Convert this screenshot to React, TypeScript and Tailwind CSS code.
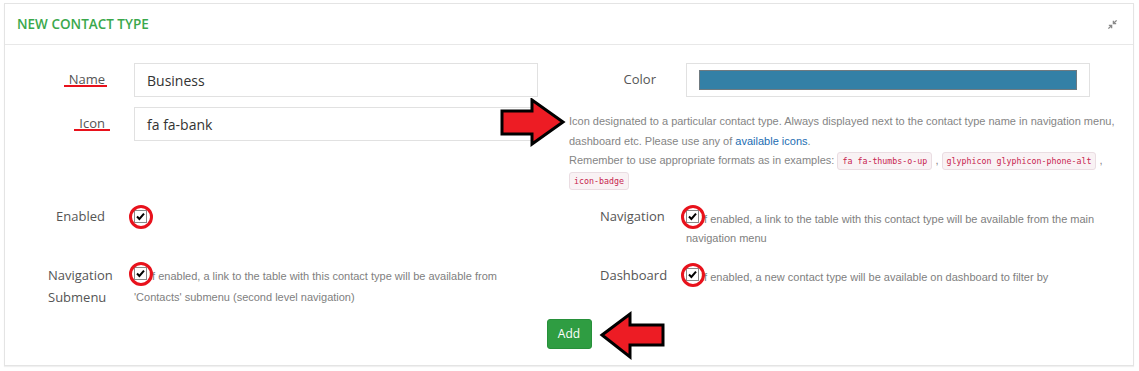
import React from "react";

const openSans = { fontFamily: '"Open Sans", "Noto Sans", sans-serif' };
const arial = { fontFamily: '"Liberation Sans", Arial, sans-serif' };
const mono = { fontFamily: '"DejaVu Sans Mono", "Liberation Mono", monospace' };

function Check() {
  return (
    <span className="relative inline-block h-[13px] w-[13px] border border-[#8a8a8a] bg-white align-baseline">
      <svg viewBox="0 0 13 13" className="absolute -left-px -top-px h-[13px] w-[13px]">
        <path d="M3 6.5 L5.4 9 L10 3.6" fill="none" stroke="#000" strokeWidth="2" />
      </svg>
      {/* red annotation ring */}
      <span className="absolute -left-[6.5px] -top-[6.5px] h-[24px] w-[24px] rounded-full border-[3px] border-[#e8121c]" />
    </span>
  );
}

function Code({ children }: { children: React.ReactNode }) {
  return (
    <code
      style={mono}
      className="inline-block h-[18px] rounded-[3px] border border-[#eadde2] bg-[#f9f2f4] px-[4px] align-middle text-[8.3px] leading-[16px] text-[#c7254e]"
    >
      {children}
    </code>
  );
}

function Arrow({ left }: { left?: boolean }) {
  const pts = left
    ? "3,24 31,3 31,14 64,14 64,34 31,34 31,46"
    : "3,13 33,13 33,2 64,24 33,46 33,36 3,36";
  return (
    <svg width="68" height="50" viewBox="0 0 68 50">
      <polygon points={pts} fill="#ed1c24" stroke="#000" strokeWidth="3" strokeLinejoin="miter" />
    </svg>
  );
}

function Underlined({ text, className }: { text: string; className: string }) {
  return (
    <span className="relative">
      {text}
      <span className={`absolute top-[15px] h-[2px] bg-[#e8121c] ${className}`} />
    </span>
  );
}

export default function App() {
  return (
    <div className="min-h-screen bg-white pl-[4px] pt-[3px]">
      <div className="relative h-[363px] w-[1130px] border border-[#e4e4e4] bg-white shadow-[0_1px_1px_rgba(0,0,0,0.06)]">
        {/* Header */}
        <div className="flex h-[41px] items-center justify-between border-b border-[#e8e8e8] pl-[12px] pr-[15px]">
          <span style={openSans} className="text-[13.5px] font-semibold text-[#3aa84c]">
            NEW CONTACT TYPE
          </span>
          <svg viewBox="0 0 24 24" className="h-[11px] w-[11px]" fill="none" stroke="#8a8a8a" strokeWidth="3">
            <polyline points="4 14 10 14 10 20" />
            <polyline points="20 10 14 10 14 4" />
            <line x1="14" y1="10" x2="21" y2="3" />
            <line x1="3" y1="21" x2="10" y2="14" />
          </svg>
        </div>

        <div className="pt-[18px]" style={openSans}>
          {/* Name / Color */}
          <div className="flex h-[34px] items-center">
            <div className="w-[100px] text-right text-[13px] text-[#555]">
              <Underlined text="Name" className="-left-[5px] -right-[2px]" />
            </div>
            <div className="ml-[29px] flex h-[34px] w-[404px] items-center border border-[#e1e1e1] pl-[12px] text-[14px] text-[#333]">
              Business
            </div>
            <div className="w-[118px] text-right text-[13px] text-[#555]">Color</div>
            <div className="ml-[30px] h-[34px] w-[404px] border border-[#e1e1e1] pl-[12px] pt-[6px]">
              <div className="h-[20px] w-[378px] border border-[#6f7a80] bg-[#3380a6]" />
            </div>
          </div>

          {/* Icon + help */}
          <div className="mt-[10px] flex">
            <div className="flex h-[34px] items-center">
              <div className="w-[100px] text-right text-[13px] text-[#555]">
                <Underlined text="Icon" className="-left-[5px] -right-[5px]" />
              </div>
              <div className="ml-[29px] flex h-[34px] w-[404px] items-center border border-[#e1e1e1] pl-[12px] text-[14px] text-[#333]">
                fa fa-bank
              </div>
            </div>
            <div style={arial} className="ml-[31px] mt-[5px] whitespace-nowrap text-[11px] leading-[19.5px] text-[#858585]">
              Icon designated to a particular contact type. Always displayed next to the contact type name in navigation menu,
              <br />
              dashboard etc. Please use any of <span className="text-[#236db2]">available icons</span>.
              <br />
              Remember to use appropriate formats as in examples: <Code>fa fa-thumbs-o-up</Code> ,{" "}
              <Code>glyphicon glyphicon-phone-alt</Code> ,
              <br />
              <Code>icon-badge</Code>
            </div>
          </div>

          {/* Enabled / Navigation */}
          <div className="mt-[16px] flex h-[58px] items-start">
            <div className="flex w-[560px] items-start">
              <div className="w-[100px] text-right text-[13px] leading-[20px] text-[#555]">Enabled</div>
              <div style={arial} className="ml-[29px] mt-[4px] text-[11px] leading-[19px]">
                <Check />
              </div>
            </div>
            <div className="flex items-start">
              <div className="ml-[35px] w-[86px] text-[13px] leading-[20px] text-[#555]">Navigation</div>
              <div style={arial} className="mt-[4px] whitespace-nowrap text-[11px] leading-[19px] text-[#808080]">
                <Check />
                <span className="ml-[2px]">If enabled, a link to the table with this contact type will be available from the main</span>
                <br />
                navigation menu
              </div>
            </div>
          </div>

          {/* Navigation Submenu / Dashboard */}
          <div className="flex items-start">
            <div className="flex w-[560px] items-start">
              <div className="w-[100px] pl-[43px] text-[13px] leading-[22px] text-[#555]">
                Navigation
                <br />
                Submenu
              </div>
              <div style={arial} className="ml-[29px] mt-[2px] whitespace-nowrap text-[11px] leading-[21px] text-[#808080]">
                <Check />
                <span className="ml-[2px]">If enabled, a link to the table with this contact type will be available from</span>
                <br />
                'Contacts' submenu (second level navigation)
              </div>
            </div>
            <div className="flex items-start">
              <div className="ml-[35px] w-[86px] text-[13px] leading-[22px] text-[#555]">Dashboard</div>
              <div style={arial} className="mt-[3px] whitespace-nowrap text-[11px] leading-[21px] text-[#808080]">
                <Check />
                <span className="ml-[2px]">If enabled, a new contact type will be available on dashboard to filter by</span>
              </div>
            </div>
          </div>

          {/* Add */}
          <div className="mt-[11px] flex justify-center">
            <button className="h-[30px] w-[45px] rounded-[3px] border border-[#27903a] bg-[#2f9d42] text-[12px] text-white">
              Add
            </button>
          </div>
        </div>

        {/* annotation arrows */}
        <div className="absolute left-[494px] top-[94px]">
          <Arrow />
        </div>
        <div className="absolute left-[594px] top-[307px]">
          <Arrow left />
        </div>
      </div>
    </div>
  );
}
